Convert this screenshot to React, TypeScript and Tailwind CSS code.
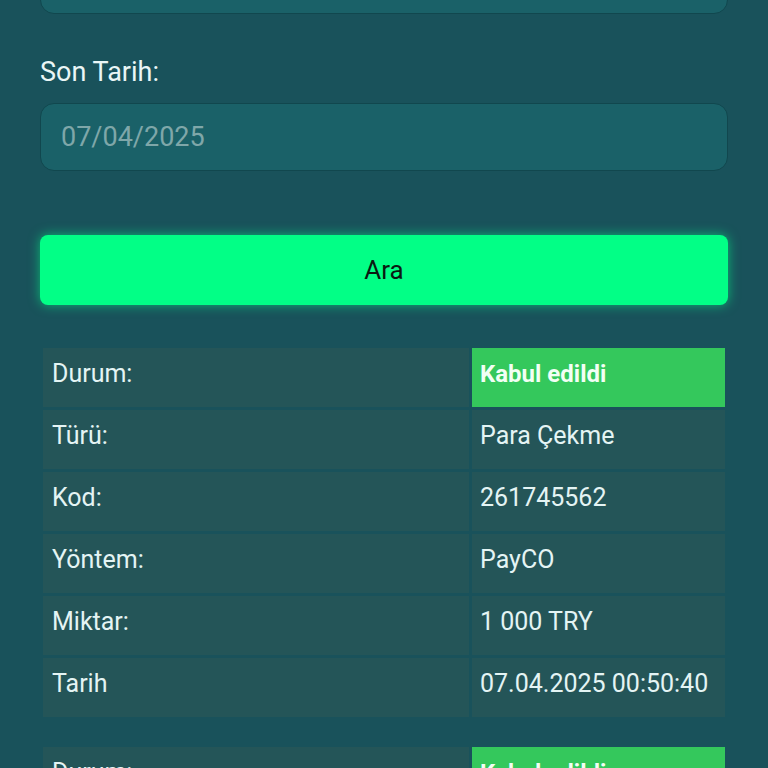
const rows = [
  { label: "Durum:", value: "Kabul edildi", status: true },
  { label: "Türü:", value: "Para Çekme" },
  { label: "Kod:", value: "261745562" },
  { label: "Yöntem:", value: "PayCO" },
  { label: "Miktar:", value: "1 000 TRY" },
  { label: "Tarih", value: "07.04.2025 00:50:40" },
];

const ResultTable = () => (
  <table className="w-full border-separate border-spacing-[3px] text-[25px] text-[#e4f4f4]">
    <tbody>
      {rows.map((r) => (
        <tr key={r.label}>
          <td className="w-[426px] h-[59px] bg-[#245558] align-top px-[9px] pt-[12px] leading-[28px]">
            {r.label}
          </td>
          <td
            className={
              r.status
                ? "h-[59px] bg-[#34c85c] align-top px-[8px] pt-[12px] leading-[28px] font-bold text-[24px] text-[#f2fff4]"
                : "h-[59px] bg-[#245558] align-top px-[8px] pt-[12px] leading-[28px]"
            }
          >
            {r.value}
          </td>
        </tr>
      ))}
    </tbody>
  </table>
);

export default function App() {
  return (
    <div
      className="min-h-screen h-[768px] overflow-hidden bg-[#19525b] px-10"
      style={{ fontFamily: "Roboto, 'Noto Sans', sans-serif" }}
    >
      {/* Başlangıç tarihi (scrolled off) */}
      <div className="-mt-[54px] h-[68px] rounded-[14px] border border-[#11474e] bg-[#1a6168]" />

      <label className="block mt-[42px] text-[27px] leading-[32px] text-[#eaf6f6]">
        Son Tarih:
      </label>
      <div className="mt-[15px] h-[68px] rounded-[14px] border border-[#11474e] bg-[#1a6168] flex items-center px-[20px] text-[27px] text-[#7fa7a9]">
        07/04/2025
      </div>

      <button className="mt-[64px] w-full h-[70px] rounded-[8px] bg-[#02ff86] text-[26px] text-[#0b1a12] shadow-[0_0_12px_rgba(0,255,136,0.6)]">
        Ara
      </button>

      <div className="mt-[40px]">
        <ResultTable />
      </div>
      <div className="mt-[24px]">
        <ResultTable />
      </div>
    </div>
  );
}
